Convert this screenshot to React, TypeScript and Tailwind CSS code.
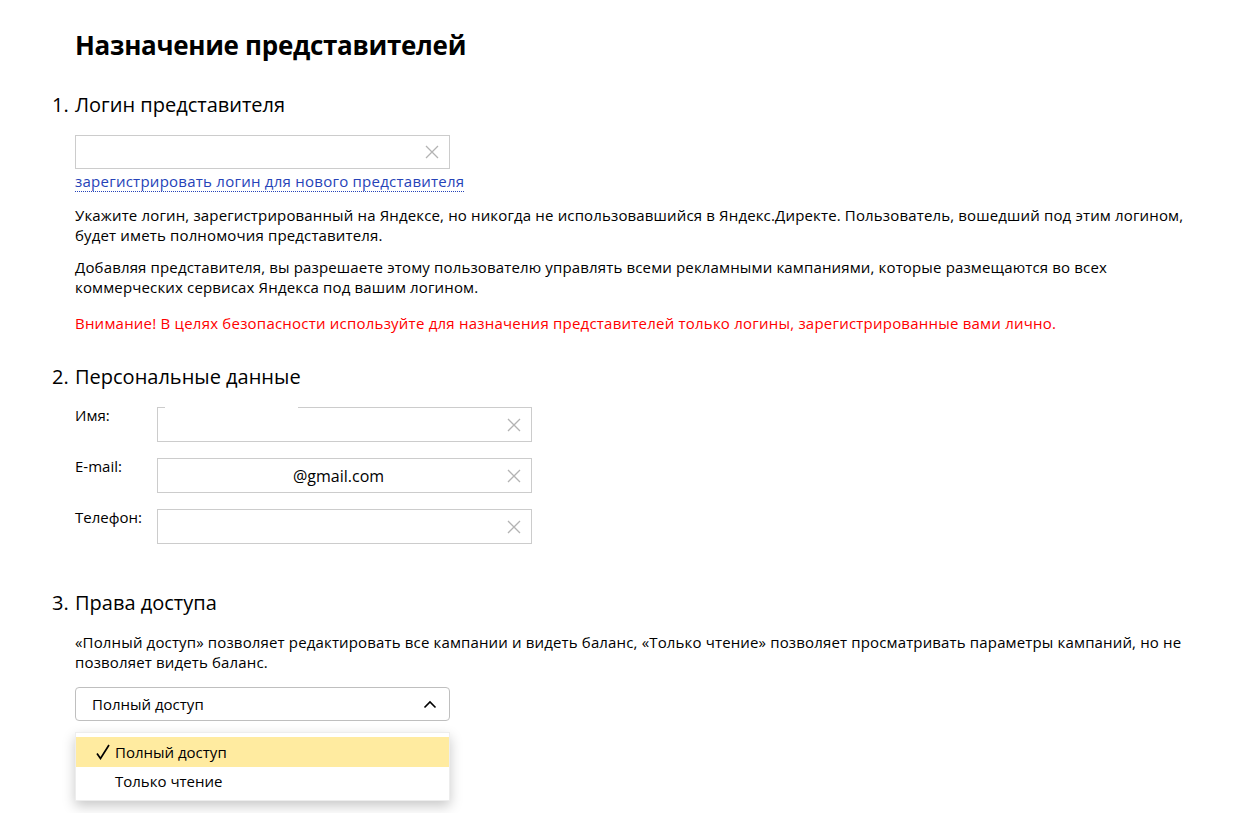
function ClearX() {
  return (
    <svg width="14" height="14" viewBox="0 0 14 14" className="shrink-0">
      <path d="M1 1 L13 13 M13 1 L1 13" stroke="#b3b3b3" strokeWidth="1.3" fill="none" />
    </svg>
  );
}

function TextInput({ height, value, pad = 0 }: { height: string; value?: string; pad?: number }) {
  return (
    <div className={`w-[375px] ${height} border border-[#cccccc] bg-white flex items-center justify-between pr-[10px]`}>
      <span className="text-[16px] text-black" style={{ paddingLeft: pad }}>
        {value}
      </span>
      <ClearX />
    </div>
  );
}

export default function App() {
  return (
    <div
      className="min-h-[813px] bg-white text-black pl-[75px] pt-[26px]"
      style={{ fontFamily: '"Open Sans", "Noto Sans", sans-serif' }}
    >
      <h1 className="text-[26px] font-bold leading-[38px] tracking-[-0.3px]">Назначение представителей</h1>

      {/* 1. Login */}
      <h2 className="relative mt-[28px] text-[20px] leading-[26px]">
        <span className="absolute -left-[23px]">1.</span>Логин представителя
      </h2>
      <div className="mt-[17px]">
        <TextInput height="h-[34px]" />
        <a className="inline-block text-[15px] leading-[20px] tracking-[0.25px] text-[#2643b8] border-b border-dotted border-[#2643b8]">
          зарегистрировать логин для нового представителя
        </a>
      </div>
      <div className="w-[1135px] text-[15px] leading-[20px] tracking-[0.15px]">
        <p className="mt-[12px]">
          Укажите логин, зарегистрированный на Яндексе, но никогда не использовавшийся в Яндекс.Директе. Пользователь, вошедший под этим логином, будет иметь полномочия представителя.
        </p>
        <p className="mt-[12px]">
          Добавляя представителя, вы разрешаете этому пользователю управлять всеми рекламными кампаниями, которые размещаются во всех коммерческих сервисах Яндекса под вашим логином.
        </p>
        <p className="mt-[16px] text-[#ff0000] tracking-[0.22px]">
          Внимание! В целях безопасности используйте для назначения представителей только логины, зарегистрированные вами лично.
        </p>
      </div>

      {/* 2. Personal */}
      <h2 className="relative mt-[31px] text-[20px] leading-[26px]">
        <span className="absolute -left-[23px]">2.</span>Персональные данные
      </h2>
      <div className="mt-[17px] flex flex-col gap-[16px] text-[15px]">
        <div className="flex">
          <span className="w-[82px] leading-[16px]">Имя:</span>
          <div className="relative">
            <TextInput height="h-[35px]" />
            <div className="absolute top-0 left-[8px] w-[133px] h-[2px] bg-white" />
          </div>
        </div>
        <div className="flex">
          <span className="w-[82px] leading-[16px]">E-mail:</span>
          <TextInput height="h-[35px]" value="@gmail.com" pad={135} />
        </div>
        <div className="flex">
          <span className="w-[82px] leading-[16px]">Телефон:</span>
          <TextInput height="h-[35px]" />
        </div>
      </div>

      {/* 3. Access */}
      <h2 className="relative mt-[46px] text-[20px] leading-[26px]">
        <span className="absolute -left-[23px]">3.</span>Права доступа
      </h2>
      <p className="mt-[16px] w-[1135px] text-[15px] leading-[20px] tracking-[0.15px]">
        «Полный доступ» позволяет редактировать все кампании и видеть баланс, «Только чтение» позволяет просматривать параметры кампаний, но не позволяет видеть баланс.
      </p>
      <div className="relative mt-[15px] w-[375px]">
        <button className="w-full h-[34px] border border-[#bfbfbf] rounded-[4px] bg-white flex items-center justify-between pl-[16px] pr-[12px] text-[15px]">
          <span>Полный доступ</span>
          <svg width="14" height="9" viewBox="0 0 14 9">
            <path d="M1.5 7.5 L7 2 L12.5 7.5" stroke="#000" strokeWidth="1.6" fill="none" />
          </svg>
        </button>
        <div className="absolute left-0 top-[45px] w-[375px] bg-white border border-[#ededed] shadow-[0_5px_12px_rgba(0,0,0,0.22)] py-[4px] text-[15px]">
          <div className="h-[30px] bg-[#ffeba0] flex items-center pl-[20px]">
            <svg width="14" height="16" viewBox="0 0 14 16" className="mr-[5px]">
              <path d="M1 9.5 L4.5 14.5 L13 1" stroke="#000" strokeWidth="1.7" fill="none" />
            </svg>
            Полный доступ
          </div>
          <div className="h-[29px] flex items-center pl-[39px]">Только чтение</div>
        </div>
      </div>
    </div>
  );
}
